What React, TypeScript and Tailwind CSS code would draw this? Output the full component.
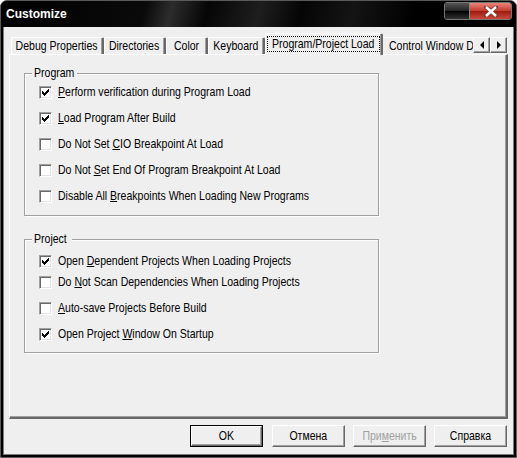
import React from "react";

// the dialog font is a tall narrow sans; squeeze Liberation Sans to match
const Narrow = ({ children, center }: { children: React.ReactNode; center?: boolean }) => (
  <span className={`inline-block whitespace-nowrap scale-x-[0.81] ${center ? "origin-center" : "origin-left"}`}>{children}</span>
);

const Check = ({ checked }: { checked?: boolean }) => (
  <span className="w-[13px] h-[13px] shrink-0 bg-white border border-t-[#a0a0a0] border-l-[#a0a0a0] border-r-white border-b-white shadow-[inset_1px_1px_0_#696969,inset_-1px_-1px_0_#e3e3e3] flex items-center justify-center">
    {checked && (
      <svg width="7" height="7" viewBox="0 0 7 7" shapeRendering="crispEdges">
        <path d="M0 2L2 4L7 -1L7 2L2 7L0 5Z" fill="#000" />
      </svg>
    )}
  </span>
);

const Row = ({ checked, children, className = "" }: { checked?: boolean; children: React.ReactNode; className?: string }) => (
  <div className={`flex items-center h-[16px] gap-[6px] ${className}`}>
    <Check checked={checked} />
    <Narrow>{children}</Narrow>
  </div>
);

const Group = ({ title, titleW, children, className = "" }: { title: string; titleW: string; children: React.ReactNode; className?: string }) => (
  <div className={`relative w-[355px] border border-[#a0a0a0] shadow-[1px_1px_0_#fff,inset_1px_1px_0_#fff] pl-[14px] ${className}`}>
    <span className={`absolute -top-[8px] left-[7px] ${titleW} bg-[#efefef] px-[2px] leading-[14px] overflow-hidden`}>
      <Narrow>{title}</Narrow>
    </span>
    {children}
  </div>
);

const Button = ({ children, isDefault, disabled }: { children: React.ReactNode; isDefault?: boolean; disabled?: boolean }) => (
  <div className={`w-[73px] h-[22px] ${isDefault ? "border border-black mr-[1px]" : ""}`}>
    <div className="h-full bg-[#efefef] border border-t-white border-l-white border-r-[#696969] border-b-[#696969] shadow-[inset_-1px_-1px_0_#a0a0a0] flex items-center justify-center">
      <span className={disabled ? "text-[#a0a0a0]" : "text-black"}>
        <Narrow center>{children}</Narrow>
      </span>
    </div>
  </div>
);

const Tab = ({ label, w }: { label: string; w: string }) => (
  <div className={`${w} h-[17px] shrink-0 border-t border-l border-t-white border-l-white border-r-[2px] border-r-[#696969] rounded-t-[2px] shadow-[inset_-1px_0_0_#a0a0a0] flex items-center justify-center overflow-hidden`}>
    <Narrow center>{label}</Narrow>
  </div>
);

export default function App() {
  return (
    <div className="w-[517px] h-[458px] bg-black border border-[#5a5a5a] rounded-t-[7px] overflow-hidden flex flex-col font-['Liberation_Sans',Arial,sans-serif] text-[13px] text-black">
      {/* title bar */}
      <div className="h-[26px] shrink-0 flex items-start justify-between bg-[linear-gradient(105deg,#000_0%,#0a0a0a_28%,#2c2c2c_33%,#060606_40%,#1e1e1e_50%,#050505_58%,#141414_68%,#000_80%)]">
        <span className="mt-[6px] ml-[5px] font-bold text-[12px] text-white leading-[14px]">Customize</span>
        <div className="flex mr-[4px] mt-[1px] rounded-[3px] overflow-hidden border border-[#777]">
          <div className="w-[25px] h-[16px] bg-[linear-gradient(#555,#222_50%,#000_51%,#333)] border-r border-[#888]" />
          <div className="w-[41px] h-[16px] bg-[linear-gradient(#e8857a,#c43a2c_50%,#9e1b0f_51%,#c8493a)] flex items-center justify-center">
            <svg width="14" height="11" viewBox="0 0 14 11">
              <path d="M2 1L12 10M12 1L2 10" stroke="#8a3a33" strokeWidth="4" strokeLinecap="square" />
              <path d="M2 1L12 10M12 1L2 10" stroke="#fff" strokeWidth="2.4" />
            </svg>
          </div>
        </div>
      </div>

      {/* client */}
      <div className="flex-1 mx-[2px] mb-[2px] border-x border-b border-[#7a7a7a] bg-[#efefef] flex flex-col pt-[6px]">
        {/* tab strip */}
        <div className="h-[21px] shrink-0 flex items-end pl-[7px] relative z-10">
          <Tab label="Debug Properties" w="w-[93px]" />
          <Tab label="Directories" w="w-[62px]" />
          <Tab label="Color" w="w-[42px]" />
          <Tab label="Keyboard" w="w-[57px]" />
          <div className="w-[118px] h-[22px] -mb-[1px] shrink-0 bg-[#efefef] border-t border-l border-t-white border-l-white border-r-[2px] border-r-[#696969] rounded-t-[2px] shadow-[inset_-1px_0_0_#a0a0a0] flex items-start justify-center pt-[2px]">
            <span className="w-[113px] h-[16px] border border-dotted border-black leading-[14px] flex justify-center">
              <Narrow center>Program/Project Load</Narrow>
            </span>
          </div>
          <div className="w-[90px] h-[17px] shrink-0 border-t border-t-white flex items-center pl-[6px] overflow-hidden">
            <Narrow>Control Window D</Narrow>
          </div>
          <div className="self-start mt-[4px] flex">
            {["M5 0L1 4L5 8Z", "M1 0L5 4L1 8Z"].map((d) => (
              <div key={d} className="w-[17px] h-[16px] bg-[#efefef] border border-t-white border-l-white border-r-[#696969] border-b-[#696969] shadow-[inset_-1px_-1px_0_#a0a0a0] flex items-center justify-center">
                <svg width="6" height="8" viewBox="0 0 6 8">
                  <path d={d} fill="#000" />
                </svg>
              </div>
            ))}
          </div>
        </div>

        {/* tab panel */}
        <div className="flex-1 mx-[5px] border-t border-l border-t-white border-l-white border-r-[2px] border-b-[2px] border-r-[#696969] border-b-[#696969] shadow-[inset_-1px_-1px_0_#a0a0a0] pt-[18px] pl-[14px]">
          <Group title="Program" titleW="w-[45px]" className="pt-[10px] pb-[11px] flex flex-col gap-[10px]">
            <Row checked><u>P</u>erform verification during Program Load</Row>
            <Row checked><u>L</u>oad Program After Build</Row>
            <Row>Do Not Set <u>C</u>IO Breakpoint At Load</Row>
            <Row>Do Not <u>S</u>et End Of Program Breakpoint At Load</Row>
            <Row>Disable All <u>B</u>reakpoints When Loading New Programs</Row>
          </Group>
          <Group title="Project" titleW="w-[40px]" className="mt-[23px] pt-[13px] pb-[10px] flex flex-col">
            <Row checked>Open <u>D</u>ependent Projects When Loading Projects</Row>
            <Row className="mt-[5px]">Do <u>N</u>ot Scan Dependencies When Loading Projects</Row>
            <Row className="mt-[10px]"><u>A</u>uto-save Projects Before Build</Row>
            <Row checked className="mt-[10px]">Open Project <u>W</u>indow On Startup</Row>
          </Group>
        </div>

        {/* buttons */}
        <div className="h-[22px] shrink-0 mt-[6px] mb-[7px] mr-[6px] flex justify-end gap-[8px]">
          <Button isDefault>OK</Button>
          <Button>Отмена</Button>
          <Button disabled>При<u>м</u>енить</Button>
          <Button>Справка</Button>
        </div>
      </div>
    </div>
  );
}
